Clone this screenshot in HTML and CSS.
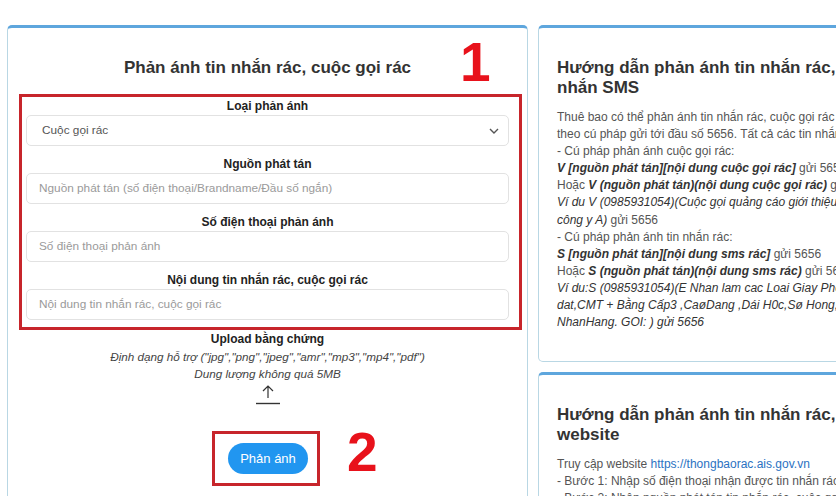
FILE: index.html
```html
<!DOCTYPE html>
<html lang="vi">
<head>
<meta charset="utf-8">
<title>Phản ánh tin nhắn rác</title>
<link rel="stylesheet" href="styles.css">
</head>
<body>
<div class="page">
  <div class="col-left">
    <section class="card form-card">
      <h2 class="form-title">Phản ánh tin nhắn rác, cuộc gọi rác</h2>
      <span class="mark mark-1">1</span>
      <div class="highlight">
        <div class="group">
          <label class="label">Loại phản ánh</label>
          <div class="select-wrap">
            <div class="select">Cuộc gọi rác</div>
            <svg class="chev" width="10" height="6" viewBox="0 0 10 6"><path d="M1 1 L5 5 L9 1" fill="none" stroke="#555" stroke-width="1.4"/></svg>
          </div>
        </div>
        <div class="group">
          <label class="label">Nguồn phát tán</label>
          <div class="input">Nguồn phát tán (số điện thoại/Brandname/Đầu số ngắn)</div>
        </div>
        <div class="group">
          <label class="label">Số điện thoại phản ánh</label>
          <div class="input">Số điện thoại phản ánh</div>
        </div>
        <div class="group">
          <label class="label">Nội dung tin nhắn rác, cuộc gọi rác</label>
          <div class="input">Nội dung tin nhắn rác, cuộc gọi rác</div>
        </div>
      </div>
      <div class="upload">
        <div class="upload-title">Upload bằng chứng</div>
        <div class="upload-note">Định dạng hỗ trợ ("jpg","png","jpeg","amr","mp3","mp4","pdf")</div>
        <div class="upload-note">Dung lượng không quá 5MB</div>
        <svg class="upload-icon" width="26" height="22" viewBox="0 0 26 22">
          <path d="M13 15 V3 M8 8 L13 3 L18 8" fill="none" stroke="#333" stroke-width="1.2"/>
          <path d="M1 20.5 H25" stroke="#333" stroke-width="1.4"/>
        </svg>
      </div>
      <div class="submit-row">
        <div class="btn-box"><button class="btn">Phản ánh</button></div>
        <span class="mark mark-2">2</span>
      </div>
    </section>
  </div>
  <div class="col-right">
    <section class="card info-card">
      <h3 class="info-title">Hướng dẫn phản ánh tin nhắn rác, tin<br>nhắn SMS</h3>
      <div class="info-body">
        <div class="ln">Thuê bao có thể phản ánh tin nhắn rác, cuộc gọi rác qua tin nhắn</div>
        <div class="ln">theo cú pháp gửi tới đầu số 5656. Tất cả các tin nhắn đều miễn phí.</div>
        <div class="ln">- Cú pháp phản ánh cuộc gọi rác:</div>
        <div class="ln"><b><i>V [nguồn phát tán][nội dung cuộc gọi rác]</i></b> gửi 5656</div>
        <div class="ln">Hoặc <b><i>V (nguồn phát tán)(nội dung cuộc gọi rác)</i></b> gửi 5656</div>
        <div class="ln"><i>Ví du V (0985931054)(Cuộc gọi quảng cáo giới thiệu</i></div>
        <div class="ln"><i>công y A)</i> gửi 5656</div>
        <div class="ln">- Cú pháp phản ánh tin nhắn rác:</div>
        <div class="ln"><b><i>S [nguồn phát tán][nội dung sms rác]</i></b> gửi 5656</div>
        <div class="ln">Hoặc <b><i>S (nguồn phát tán)(nội dung sms rác)</i></b> gửi 5656</div>
        <div class="ln"><i>Ví du:S (0985931054)(E Nhan lam cac Loai Giay Phep</i></div>
        <div class="ln"><i>dat,CMT + Bằng Cấp3 ,CaøDang ,Dái H0c,Sø Hong,</i></div>
        <div class="ln"><i>NhanHang. GOI: ) gửi 5656</i></div>
      </div>
    </section>
    <section class="card info-card">
      <h3 class="info-title">Hướng dẫn phản ánh tin nhắn rác, cuộc<br>website</h3>
      <div class="info-body">
        <div class="ln">Truy cập website <a class="link" href="#">https://thongbaorac.ais.gov.vn</a></div>
        <div class="ln">- Bước 1: Nhập số điện thoại nhận được tin nhắn rác, cuộc gọi rác</div>
        <div class="ln">- Bước 2: Nhập nguồn phát tán tin nhắn rác, cuộc gọi rác</div>
      </div>
    </section>
  </div>
</div>
</body>
</html>
```

FILE: styles.css
```css
html, body {
  margin: 0;
  padding: 0;
  overflow: hidden;
  background: #ffffff;
}
body {
  font-family: "Liberation Sans", Arial, sans-serif;
  color: #333;
  width: 836px;
  height: 496px;
}
.page {
  display: flex;
  gap: 10px;
  padding: 25px 0 0 7px;
  width: 1000px;
}
.col-left {
  width: 521px;
  flex: none;
}
.col-right {
  width: 360px;
  flex: none;
  display: flex;
  flex-direction: column;
  gap: 10px;
}
.card {
  background: #fff;
  border: 1px solid #b9d7e4;
  border-top: 3px solid #5ea6dd;
  border-radius: 5px;
  box-sizing: border-box;
}
.form-card {
  position: relative;
  height: 520px;
  padding-top: 30px;
}
.form-title {
  margin: 0;
  text-align: center;
  font-size: 17px;
  line-height: 20px;
  font-weight: bold;
  color: #333;
}
.mark {
  position: absolute;
  color: #e8121b;
  font-weight: bold;
  font-size: 55px;
  line-height: 1;
}
.mark-1 {
  top: 7px;
  left: 452px;
}
.highlight {
  margin: 16px 5px 0 11px;
  border: 3px solid #c7252b;
  padding: 1px 10px 7px 4px;
}
.group {
  margin-bottom: 10px;
}
.group:last-child {
  margin-bottom: 0;
}
.label {
  display: block;
  text-align: center;
  font-size: 12px;
  line-height: 17px;
  font-weight: bold;
  color: #222;
}
.select-wrap {
  position: relative;
}
.select, .input {
  height: 31px;
  box-sizing: border-box;
  border: 1px solid #e2e2e2;
  border-radius: 5px;
  font-size: 11.8px;
  line-height: 29px;
  white-space: nowrap;
}
.select {
  padding-left: 15px;
  color: #555;
}
.input {
  padding-left: 12px;
  color: #9a9a9a;
}
.chev {
  position: absolute;
  right: 10px;
  top: 13px;
}
.upload {
  text-align: center;
  margin-top: 1px;
}
.upload-title {
  font-size: 12px;
  line-height: 17px;
  font-weight: bold;
  color: #222;
}
.upload-note {
  font-size: 11.7px;
  line-height: 17px;
  font-style: italic;
  color: #444;
}
.upload-icon {
  display: block;
  margin: 1px auto 0;
}
.submit-row {
  position: relative;
  display: flex;
  justify-content: center;
  margin-top: 26px;
}
.btn-box {
  border: 3px solid #c7252b;
  padding: 9px 9px 9px 13px;
  margin-right: 3px;
}
.btn {
  display: block;
  width: 80px;
  height: 31px;
  border: none;
  border-radius: 16px;
  background: #2196f0;
  color: #fff;
  font-family: "Liberation Sans", Arial, sans-serif;
  font-size: 13px;
  padding: 0;
}
.mark-2 {
  top: -6px;
  left: 339px;
}
.info-card {
  padding: 30px 18px 0 18px;
  overflow: hidden;
}
.col-right .info-card:first-child {
  height: 337px;
}
.col-right .info-card:last-child {
  height: 200px;
}
.info-title {
  margin: 0 0 11px;
  font-size: 17px;
  line-height: 20px;
  font-weight: bold;
  color: #333;
  white-space: nowrap;
}
.info-body {
  font-size: 12px;
  line-height: 17.1px;
  color: #555;
}
.ln {
  white-space: nowrap;
}
.info-body b, .info-body i {
  color: #333;
}
.link {
  color: #2b72c2;
  text-decoration: none;
}
```
